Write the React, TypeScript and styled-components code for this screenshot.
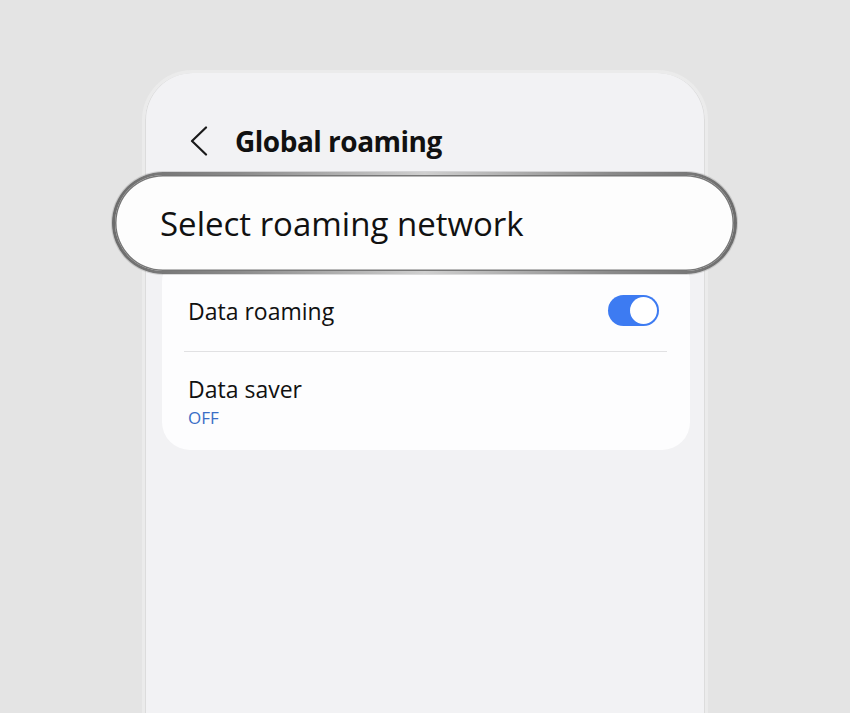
import styled, { createGlobalStyle } from "styled-components";

const GlobalStyle = createGlobalStyle`
  html, body {
    margin: 0;
    padding: 0;
    background: #e4e4e4;
    height: 713px;
    overflow: hidden;
  }
  body {
    font-family: "Open Sans", Roboto, "Liberation Sans", sans-serif;
    color: #111;
  }
`;

function App() {
  return (
    <>
      <GlobalStyle />
      <Stage>
        <Phone>
          <Content>
            <Header>
              <BackButton aria-label="Back">
                <svg width="18" height="30" viewBox="0 0 18 30">
                  <polyline
                    points="16,1.5 2,15 16,28.5"
                    fill="none"
                    stroke="#1a1a1a"
                    strokeWidth="2.2"
                    strokeLinecap="round"
                    strokeLinejoin="round"
                  />
                </svg>
              </BackButton>
              <Title>Global roaming</Title>
            </Header>

            <Highlight>
              <HighlightInner>Select roaming network</HighlightInner>
            </Highlight>

            <Card>
              <Row>
                <Label>Data roaming</Label>
                <Toggle $on>
                  <Knob />
                </Toggle>
              </Row>
              <Divider />
              <Row $tall>
                <TextStack>
                  <Label>Data saver</Label>
                  <SubLabel>OFF</SubLabel>
                </TextStack>
              </Row>
            </Card>
          </Content>
        </Phone>
      </Stage>
    </>
  );
}

export default App;

const Stage = styled.div`
  padding: 70px 0 0 142px;
  height: 713px;
  box-sizing: border-box;
  overflow: hidden;
`;

const Phone = styled.div`
  width: 566px;
  height: 643px;
  box-sizing: border-box;
  background: #f2f2f4;
  border: 3px solid #ebebeb;
  border-bottom: none;
  border-radius: 50px 50px 0 0;
  box-shadow: inset 1px 0 0 #dcdcdc, inset -1px 0 0 #dcdcdc;
`;

const Content = styled.div`
  padding: 50px 15px 0 17px;
  display: flex;
  flex-direction: column;
`;

const Header = styled.div`
  height: 36px;
  display: flex;
  align-items: center;
  padding-left: 28px;
`;

const BackButton = styled.div`
  width: 18px;
  height: 30px;
  display: flex;
  align-items: center;
  margin-right: 27px;
`;

const Title = styled.h1`
  margin: 0;
  font-size: 28px;
  font-weight: 700;
  letter-spacing: -0.5px;
  color: #111;
`;

const Highlight = styled.div`
  position: relative;
  z-index: 2;
  margin: 13px -47px 0 -50px;
  height: 102px;
  box-sizing: border-box;
  padding: 3px;
  border-radius: 51px;
  background: linear-gradient(
    90deg,
    #6c6c6c 0%,
    #8a8a8a 20%,
    #cfcfcf 50%,
    #8a8a8a 80%,
    #6c6c6c 100%
  );
  box-shadow: 0 0 0 1px rgba(120, 120, 120, 0.25);
`;

const HighlightInner = styled.div`
  height: 100%;
  border-radius: 48px;
  background: #fdfdfd;
  box-shadow: inset 0 0 0 1.5px #777;
  display: flex;
  align-items: center;
  padding-left: 45px;
  font-size: 33px;
  color: #111;
`;

const Card = styled.div`
  margin-top: -20px;
  padding-top: 20px;
  background: #fdfdfe;
  border-radius: 28px;
  display: flex;
  flex-direction: column;
`;

const Row = styled.div<{ $tall?: boolean }>`
  height: ${(p) => (p.$tall ? "98px" : "77px")};
  box-sizing: border-box;
  display: flex;
  align-items: center;
  justify-content: space-between;
  padding: ${(p) => (p.$tall ? "0 31px 0 26px" : "0 31px 4px 26px")};
`;

const Label = styled.div`
  font-size: 23px;
  line-height: 28px;
  color: #111;
`;

const TextStack = styled.div`
  display: flex;
  flex-direction: column;
  gap: 4px;
  margin-top: 2px;
`;

const SubLabel = styled.div`
  font-size: 17px;
  line-height: 22px;
  color: #3a6ec6;
`;

const Divider = styled.div`
  height: 1px;
  background: #e1e1e3;
  margin: 0 23px 0 22px;
`;

const Toggle = styled.div<{ $on?: boolean }>`
  width: 51px;
  height: 31px;
  box-sizing: border-box;
  border-radius: 16px;
  background: ${(p) => (p.$on ? "#3d7bf2" : "#c6c6c6")};
  padding: 2px;
  display: flex;
  justify-content: ${(p) => (p.$on ? "flex-end" : "flex-start")};
  align-items: center;
`;

const Knob = styled.div`
  width: 27px;
  height: 27px;
  border-radius: 50%;
  background: #ffffff;
`;
